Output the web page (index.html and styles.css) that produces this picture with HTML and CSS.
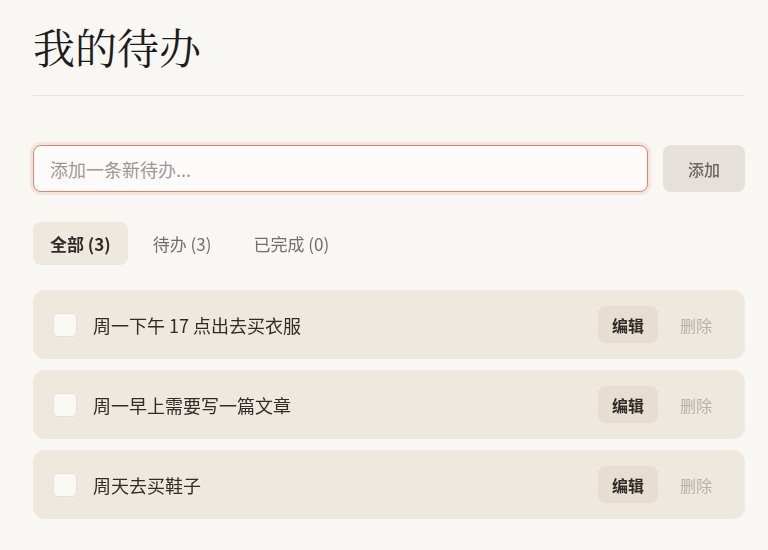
FILE: index.html
```html
<!DOCTYPE html>
<html lang="zh-CN">
<head>
<meta charset="utf-8">
<title>我的待办</title>
<link rel="stylesheet" href="styles.css">
</head>
<body>
<main class="app">
  <header class="header">
    <h1 class="title">我的待办</h1>
  </header>
  <form class="add-row" onsubmit="return false">
    <input class="add-input" type="text" placeholder="添加一条新待办..." autofocus>
    <button class="add-btn" type="submit">添加</button>
  </form>
  <nav class="tabs">
    <button class="tab active">全部 (3)</button>
    <button class="tab">待办 (3)</button>
    <button class="tab">已完成 (0)</button>
  </nav>
  <ul class="list">
    <li class="item">
      <span class="check"></span>
      <span class="text">周一下午 17 点出去买衣服</span>
      <button class="edit">编辑</button>
      <button class="del">删除</button>
    </li>
    <li class="item">
      <span class="check"></span>
      <span class="text">周一早上需要写一篇文章</span>
      <button class="edit">编辑</button>
      <button class="del">删除</button>
    </li>
    <li class="item">
      <span class="check"></span>
      <span class="text">周天去买鞋子</span>
      <button class="edit">编辑</button>
      <button class="del">删除</button>
    </li>
  </ul>
</main>
</body>
</html>
```
FILE: styles.css
```css
* { box-sizing: border-box; }
body {
  margin: 0;
  background: #f9f7f4;
  color: #2f2b28;
  font-family: "Noto Sans CJK SC", "Noto Sans", sans-serif;
}
.app {
  padding: 0 23px 0 33px;
}
.header {
  padding-top: 22px;
  padding-bottom: 24px;
  border-bottom: 1px solid #e6e1dc;
}
.title {
  margin: 0;
  font-family: "Noto Serif CJK SC", "Liberation Serif", serif;
  font-weight: 400;
  font-size: 42px;
  line-height: 49px;
  color: #1f1d1b;
}
.add-row {
  display: flex;
  gap: 15px;
  margin-top: 49px;
}
.add-input {
  flex: 1;
  height: 47px;
  border: 1.5px solid #e2836b;
  border-radius: 8px;
  background: #fcfbf9;
  box-shadow: 0 0 0 3px rgba(226, 131, 107, 0.16);
  padding: 0 16px;
  font: inherit;
  font-size: 18px;
  color: #2f2b28;
  outline: none;
}
.add-input::placeholder { color: #9d9791; }
.add-btn {
  width: 82px;
  height: 47px;
  border: none;
  border-radius: 8px;
  background: #e6e0da;
  color: #6c6560;
  font: inherit;
  font-size: 16px;
  font-weight: 500;
}
.tabs {
  display: flex;
  gap: 8px;
  margin-top: 30px;
}
.tab {
  height: 43px;
  padding: 0 17px;
  border: none;
  border-radius: 8px;
  background: transparent;
  color: #756e68;
  font: inherit;
  font-size: 17px;
}
.tab.active {
  background: #efe8de;
  color: #2f2b28;
  font-weight: 700;
}
.list {
  list-style: none;
  margin: 25px 0 0;
  padding: 0;
  display: flex;
  flex-direction: column;
  gap: 11px;
}
.item {
  display: flex;
  align-items: center;
  height: 69px;
  padding: 0 19px 0 20px;
  background: #efe8de;
  border-radius: 12px;
}
.check {
  width: 24px;
  height: 24px;
  border: 1.5px solid #e8e0d6;
  border-radius: 5px;
  background: #faf8f5;
  flex-shrink: 0;
}
.text {
  flex: 1;
  margin-left: 16px;
  font-size: 18px;
  color: #2f2b28;
}
.edit, .del {
  height: 37px;
  padding: 0 14px;
  border: none;
  border-radius: 8px;
  font: inherit;
  font-size: 16px;
}
.edit {
  background: #e7ddd1;
  color: #2f2b28;
  font-weight: 700;
}
.del {
  margin-left: 8px;
  background: transparent;
  color: #b8afa6;
}
```
